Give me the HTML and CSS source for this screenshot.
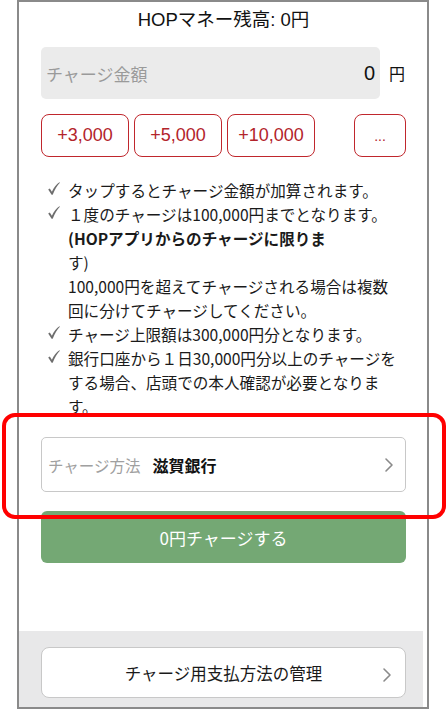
FILE: index.html
```html
<!DOCTYPE html>
<html lang="ja">
<head>
<meta charset="utf-8">
<title>HOPマネー チャージ</title>
<link rel="stylesheet" href="styles.css">
</head>
<body>
<div class="screen">
  <div class="main">
    <div class="title">HOPマネー残高: 0円</div>
    <div class="amount-row">
      <div class="amount">
        <span class="placeholder">チャージ金額</span>
        <span class="value">0</span>
      </div>
      <span class="yen">円</span>
    </div>
    <div class="chips">
      <button class="chip">+3,000</button>
      <button class="chip">+5,000</button>
      <button class="chip">+10,000</button>
      <button class="chip more">...</button>
    </div>
    <ul class="notes">
      <li><span class="check"><svg width="12" height="13" viewBox="0 0 12 13"><path d="M0.2 7.6 L1.8 6.6 L3.9 9.8 C5.8 5.6 8.2 2.2 11.4 0.2 L11.9 0.8 C9.2 3.4 6.8 7.6 4.7 12.8 L3.6 12.8 Z" fill="#6e6e6e"/></svg></span><span class="txt">タップするとチャージ金額が加算されます。</span></li>
      <li><span class="check"><svg width="12" height="13" viewBox="0 0 12 13"><path d="M0.2 7.6 L1.8 6.6 L3.9 9.8 C5.8 5.6 8.2 2.2 11.4 0.2 L11.9 0.8 C9.2 3.4 6.8 7.6 4.7 12.8 L3.6 12.8 Z" fill="#6e6e6e"/></svg></span><span class="txt">１度のチャージは100,000円までとなります。<br><b>(HOPアプリからのチャージに限りま</b><br>す)<br>100,000円を超えてチャージされる場合は複数<br>回に分けてチャージしてください。</span></li>
      <li><span class="check"><svg width="12" height="13" viewBox="0 0 12 13"><path d="M0.2 7.6 L1.8 6.6 L3.9 9.8 C5.8 5.6 8.2 2.2 11.4 0.2 L11.9 0.8 C9.2 3.4 6.8 7.6 4.7 12.8 L3.6 12.8 Z" fill="#6e6e6e"/></svg></span><span class="txt">チャージ上限額は300,000円分となります。</span></li>
      <li><span class="check"><svg width="12" height="13" viewBox="0 0 12 13"><path d="M0.2 7.6 L1.8 6.6 L3.9 9.8 C5.8 5.6 8.2 2.2 11.4 0.2 L11.9 0.8 C9.2 3.4 6.8 7.6 4.7 12.8 L3.6 12.8 Z" fill="#6e6e6e"/></svg></span><span class="txt">銀行口座から１日30,000円分以上のチャージを<br>する場合、店頭での本人確認が必要となりま<br>す。</span></li>
    </ul>
    <div class="method">
      <span class="method-label">チャージ方法</span>
      <span class="method-value">滋賀銀行</span>
      <svg class="chev" width="10" height="16" viewBox="0 0 10 16"><polyline points="2,2 8,8 2,14" fill="none" stroke="#8a8a8a" stroke-width="1.6" stroke-linecap="round" stroke-linejoin="round"/></svg>
    </div>
    <button class="charge">0円チャージする</button>
  </div>
  <div class="footer">
    <div class="manage">
      <span class="manage-text">チャージ用支払方法の管理</span>
      <svg class="chev2" width="10" height="16" viewBox="0 0 10 16"><polyline points="2,2 8,8 2,14" fill="none" stroke="#8a8a8a" stroke-width="1.6" stroke-linecap="round" stroke-linejoin="round"/></svg>
    </div>
  </div>
</div>
<div class="highlight"></div>
</body>
</html>
```
FILE: styles.css
```css
* { box-sizing: border-box; }
html, body {
  margin: 0;
  padding: 0;
  background: #ffffff;
}
body {
  font-family: "Liberation Sans", "Noto Sans CJK JP", sans-serif;
  color: #1a1a1a;
  position: relative;
  width: 447px;
  height: 710px;
  overflow: hidden;
}
.screen {
  margin-left: 17px;
  width: 412px;
  height: 709px;
  border: 2px solid #8a8a8a;
  display: flex;
  flex-direction: column;
  background: #fff;
}
.main {
  padding: 0 21px 0 22px;
}
.title {
  height: 45px;
  line-height: 36px;
  text-align: center;
  font-size: 18.5px;
  color: #111;
}
.amount-row {
  display: flex;
  align-items: center;
}
.amount {
  width: 339px;
  height: 52px;
  background: #ebebeb;
  border-radius: 5px;
  display: flex;
  align-items: center;
  justify-content: space-between;
  padding: 0 5px 0 5px;
}
.placeholder {
  font-family: "Noto Sans CJK JP", sans-serif;
  font-size: 17px;
  color: #9a9a9a;
}
.value {
  font-size: 20px;
  color: #111;
}
.yen {
  margin-left: 9px;
  font-family: "Noto Sans CJK JP", sans-serif;
  font-size: 16px;
  color: #111;
}
.chips {
  margin-top: 15px;
  display: flex;
  gap: 5px;
}
.chip {
  width: 88px;
  height: 43px;
  border: 1px solid #c0272d;
  border-radius: 8px;
  background: #fff;
  color: #b3242b;
  font-family: "Liberation Sans", sans-serif;
  font-size: 18px;
  padding: 0;
}
.chip.more {
  width: 52px;
  margin-left: auto;
  font-size: 14px;
}
.notes {
  list-style: none;
  margin: 21px 0 0 0;
  padding: 0 0 0 6px;
  font-family: "Noto Sans CJK JP", sans-serif;
  font-size: 15.6px;
  line-height: 24px;
  color: #1a1a1a;
}
.notes li {
  display: flex;
}
.check {
  flex: 0 0 21px;
  display: flex;
  align-items: flex-start;
  padding-top: 4px;
  padding-left: 1px;
}
.txt b {
  font-weight: 700;
}
.method {
  margin-top: 19px;
  height: 55px;
  border: 1px solid #c8c8c8;
  border-radius: 5px;
  display: flex;
  align-items: center;
  padding: 0 11px 0 6px;
  font-family: "Noto Sans CJK JP", sans-serif;
}
.method-label {
  font-size: 15.5px;
  color: #a0a0a0;
  margin-right: 12px;
}
.method-value {
  font-size: 16px;
  font-weight: 700;
  color: #111;
}
.chev {
  margin-left: auto;
}
.charge {
  margin-top: 19px;
  width: 100%;
  height: 52px;
  border: none;
  border-radius: 6px;
  background: #74a874;
  color: #fff;
  font-family: "Noto Sans CJK JP", sans-serif;
  font-size: 17px;
  padding: 0;
}
.footer {
  margin-top: auto;
  margin-right: 4px;
  background: #e8e8e9;
  padding: 16px 17px 9px 22px;
}
.manage {
  height: 51px;
  background: #fff;
  border: 1px solid #c8c8c8;
  border-radius: 8px;
  display: flex;
  align-items: center;
  justify-content: center;
  position: relative;
  font-family: "Noto Sans CJK JP", sans-serif;
  font-size: 16.5px;
  color: #1a1a1a;
}
.chev2 {
  position: absolute;
  right: 13px;
  top: 19px;
}
.highlight {
  position: absolute;
  left: 2px;
  top: 413px;
  width: 444px;
  height: 106px;
  border: 4px solid #ff0000;
  border-radius: 13px;
  pointer-events: none;
}
```
